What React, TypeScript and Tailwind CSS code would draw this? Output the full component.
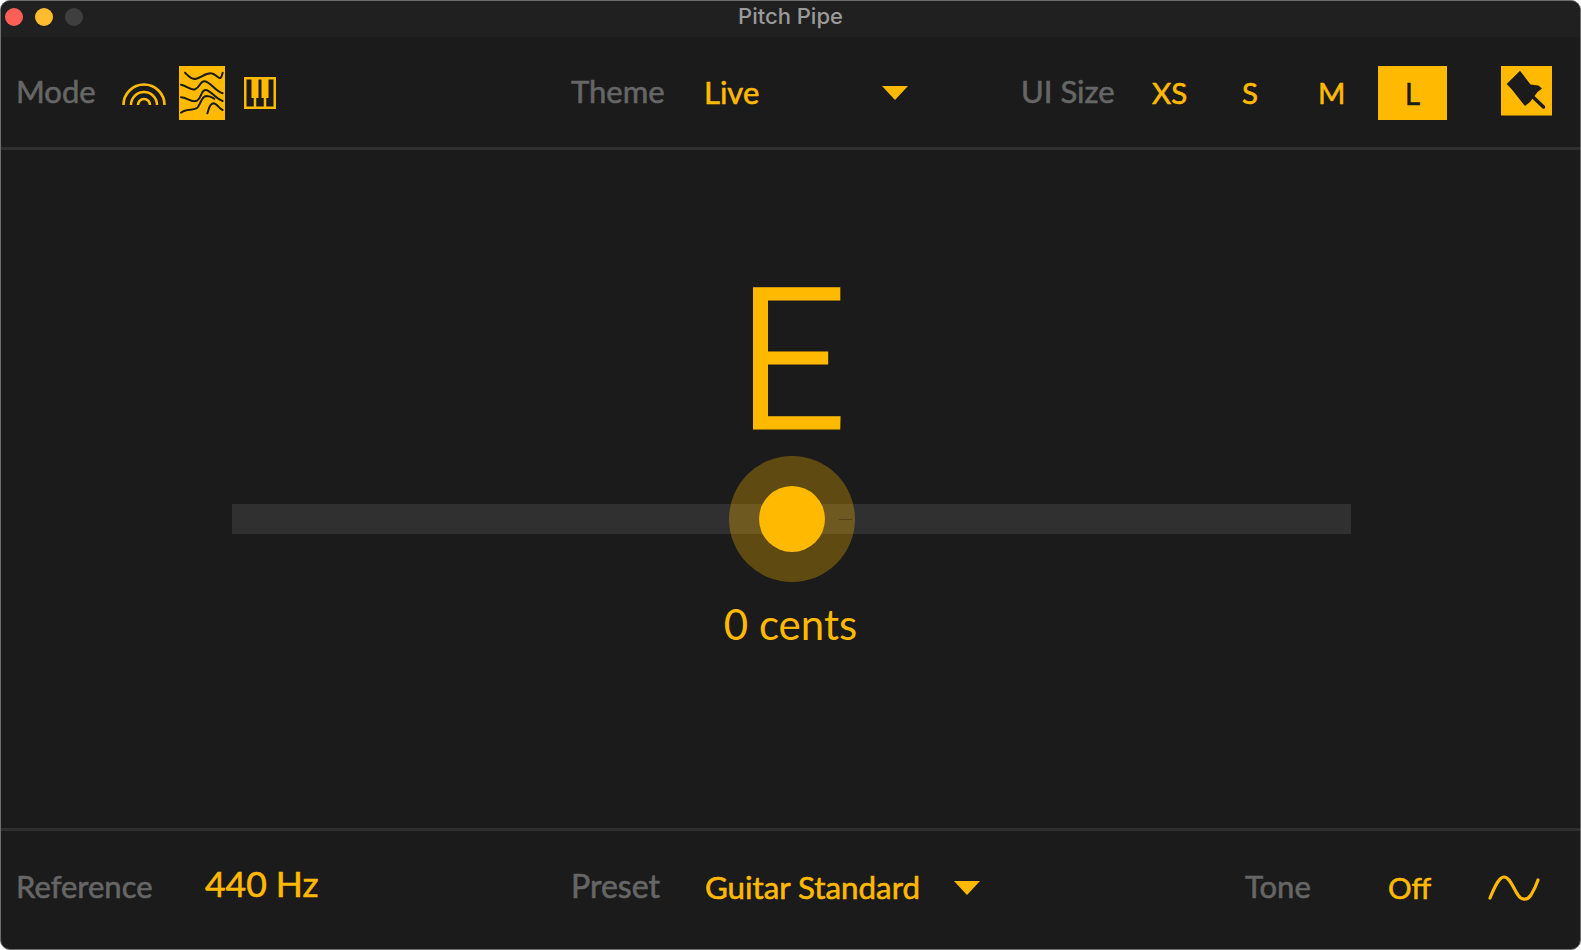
const amber = "#ffba00";

const Caret = ({ className }: { className?: string }) => (
  <svg width="26" height="14" viewBox="0 0 26 14" className={`shrink-0 ${className ?? ""}`}>
    <path d="M0 0H26L13 14Z" fill={amber} />
  </svg>
);

const RainbowIcon = () => (
  <svg width="44" height="26" viewBox="0 0 44 26" fill="none" stroke={amber} strokeWidth="2.6">
    <path d="M1.5 25a20.5 20.5 0 0 1 41 0" />
    <path d="M9 25a13 13 0 0 1 26 0" />
    <path d="M16 25a6 6 0 0 1 12 0" />
  </svg>
);

const WavesIcon = () => (
  <div className="flex h-[54px] w-[46px] items-center justify-center bg-[#ffba00]">
    <svg width="46" height="54" viewBox="0 0 138 162" fill="none" stroke="#1b1b1b" strokeWidth="6" strokeLinecap="round">
      <path d="M18 20C28 30 38 42 52 38C68 34 78 22 95 22C110 22 116 38 124 36C128 34 130 24 131 20" />
      <path d="M6 56C22 58 32 74 48 70C64 64 62 46 76 46C92 46 112 78 131 82" />
      <path d="M6 94C24 94 38 112 54 104C68 96 66 72 80 72C94 72 110 98 131 105" />
      <path d="M6 140C22 126 44 136 56 124C68 110 66 92 82 90C92 90 100 94 106 98" />
      <path d="M85 142C90 130 90 114 103 112C114 112 120 128 131 132" />
    </svg>
  </div>
);

const PianoIcon = () => (
  <svg width="32" height="32" viewBox="0 0 32 32" fill="none">
    <rect x="1.25" y="1.25" width="29.5" height="29.5" stroke={amber} strokeWidth="2.5" />
    <path d="M11 2v28M21 2v28" stroke={amber} strokeWidth="2.5" />
    <rect x="7.5" y="2" width="7" height="19" fill={amber} />
    <rect x="17.5" y="2" width="7" height="19" fill={amber} />
  </svg>
);

const PinIcon = () => (
  <div className="flex h-[50px] w-[51px] items-center justify-center border-b border-[#8f6c06] bg-[#ffba00]">
    <svg width="51" height="49" viewBox="0 0 51 49" fill="#1b1b1b">
      <path d="M5.7 18L19 4.7L22.3 9L29.5 18.5L37.5 19.5L41 22.5L36.5 26L29 36L24 40L21.7 37.3L10.7 23.3Z" />
      <path d="M32 31L42.5 41" stroke="#1b1b1b" strokeWidth="3.5" strokeLinecap="round" />
    </svg>
  </div>
);

const SineIcon = () => (
  <svg width="52" height="28" viewBox="0 0 52 28" fill="none" stroke={amber} strokeWidth="3.2" strokeLinecap="round" className="mt-[4px]">
    <path d="M2 24C7 12 11 3 16 3C22 3 25 14 30 21C33 26 39 27 43 21C46 16 48 12 50 6" />
  </svg>
);

type TextProps = { children: string; className: string; size?: string };

const Label = ({ children, className, size = "text-[31px]" }: TextProps) => (
  <span className={`${size} leading-none text-[#666666] [-webkit-text-stroke:0.6px] ${className}`}>{children}</span>
);

const Value = ({ children, className, size = "text-[31px]" }: TextProps) => (
  <span className={`${size} leading-none text-[#ffba00] [-webkit-text-stroke:0.6px] ${className}`}>{children}</span>
);

export default function App() {
  return (
    <div className="h-[950px] w-[1581px] bg-white font-['Lato',sans-serif]">
      <div className="flex h-full flex-col overflow-hidden rounded-[10px] border border-[#6e6e6e] bg-[#1b1b1b]">
        {/* Title bar */}
        <div className="relative flex h-[36px] shrink-0 items-center justify-center bg-[#202020] pb-[6px]">
          <div className="absolute left-[4px] top-[7px] flex gap-[12px]">
            <div className="h-[18px] w-[18px] rounded-full bg-[#ff5f57]" />
            <div className="h-[18px] w-[18px] rounded-full bg-[#febc2e]" />
            <div className="h-[18px] w-[18px] rounded-full bg-[#3f3f3f]" />
          </div>
          <span className="font-['Inter',sans-serif] text-[22px] font-medium text-[#9a9a9a]">Pitch Pipe</span>
        </div>

        {/* Toolbar */}
        <div className="flex h-[113px] shrink-0 items-center border-b-[3px] border-[#2f2f2f] pl-[15px] pt-[2px]">
          <Label className="-mt-[3px] w-[106px]">Mode</Label>
          <RainbowIcon />
          <div className="ml-[13px]"><WavesIcon /></div>
          <div className="ml-[19px]"><PianoIcon /></div>
          <Label className="-mt-[3px] ml-[295px] w-[133px]">Theme</Label>
          <Value className="-mt-[1px] w-[178px]">Live</Value>
          <Caret />
          <Label className="-mt-[3px] ml-[113px] w-[131px]">UI Size</Label>
          <Value className="-mt-[1px] w-[90px]" size="text-[29.5px]">XS</Value>
          <Value className="-mt-[1px] w-[76px]" size="text-[29.5px]">S</Value>
          <Value className="-mt-[1px] w-[60px]" size="text-[29.5px]">M</Value>
          <div className="flex h-[54px] w-[69px] items-center justify-center bg-[#ffba00] text-[30px] text-[#1b1b1b] [-webkit-text-stroke:0.4px]">L</div>
          <div className="-mt-[5px] ml-[54px]"><PinIcon /></div>
        </div>

        {/* Tuner */}
        <div className="flex flex-1 flex-col items-center">
          <div className="ml-[2px] mt-[105px] text-[194px] font-light leading-[194px] text-[#ffba00] [-webkit-text-stroke:5px]">E</div>
          <div className="relative ml-[2px] mt-[55px] h-[30px] w-[1119px] bg-[#303030]">
            <div className="absolute left-[497px] top-[-48px] flex h-[126px] w-[126px] items-center justify-center rounded-full bg-[#ffba00]/30">
              <div className="h-[66px] w-[66px] rounded-full bg-[#ffba00]" />
            </div>
            <div className="absolute left-[607px] top-[15px] h-px w-[13px] bg-[#4f4418]" />
          </div>
          <div className="mt-[66px] text-[42px] leading-[48px] text-[#ffba00]">0 cents</div>
        </div>

        {/* Footer */}
        <div className="flex h-[121px] shrink-0 items-center border-t-[3px] border-[#2f2f2f] pb-[8px] pl-[15px]">
          <Label className="w-[189px]">Reference</Label>
          <Value className="-mt-[5px] w-[366px]" size="text-[35.5px]">440 Hz</Value>
          <Label className="w-[134px]" size="text-[32px]">Preset</Label>
          <Value className="mt-[3px] w-[249px]" size="text-[31.3px]">Guitar Standard</Value>
          <Caret className="mt-[4px]" />
          <Label className="ml-[265px] w-[143px]">Tone</Label>
          <Value className="mt-[4px] w-[100px]" size="text-[29.5px]">Off</Value>
          <SineIcon />
        </div>
      </div>
    </div>
  );
}
